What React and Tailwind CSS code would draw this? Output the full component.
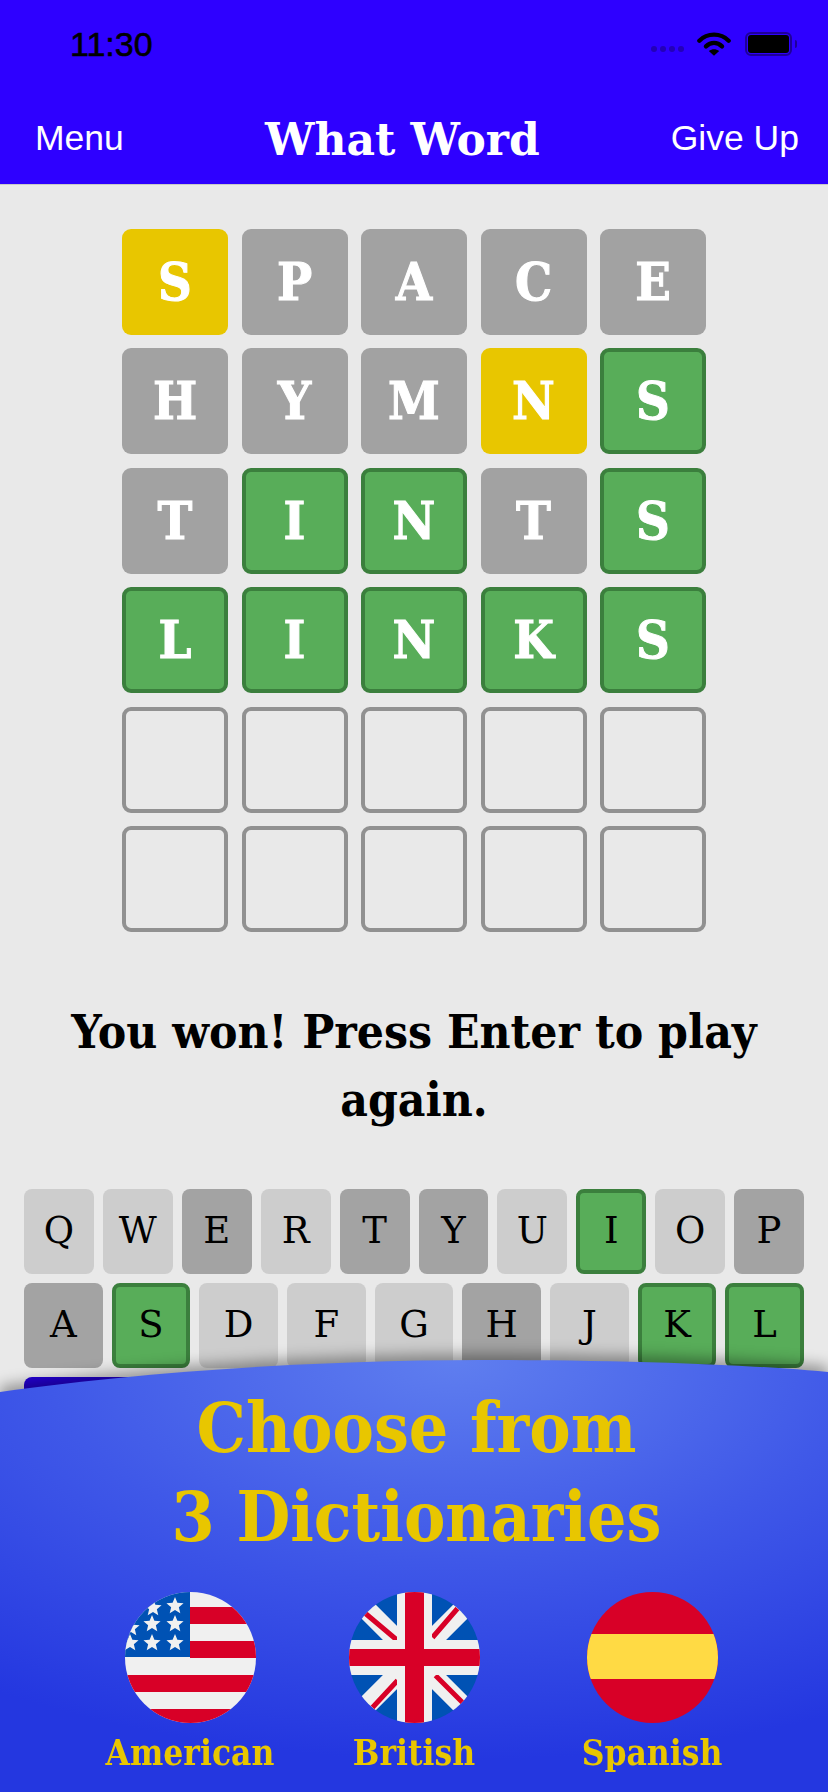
const GRID = [
  [['S', 'y'], ['P', 'x'], ['A', 'x'], ['C', 'x'], ['E', 'x']],
  [['H', 'x'], ['Y', 'x'], ['M', 'x'], ['N', 'y'], ['S', 'g']],
  [['T', 'x'], ['I', 'g'], ['N', 'g'], ['T', 'x'], ['S', 'g']],
  [['L', 'g'], ['I', 'g'], ['N', 'g'], ['K', 'g'], ['S', 'g']],
  [['', 'e'], ['', 'e'], ['', 'e'], ['', 'e'], ['', 'e']],
  [['', 'e'], ['', 'e'], ['', 'e'], ['', 'e'], ['', 'e']],
]

const TILE = {
  y: 'bg-[#e8c600]',
  x: 'bg-[#a2a2a2]',
  g: 'bg-[#58ad59] border-4 border-[#3b7f3d]',
  e: 'border-4 border-[#919191]',
}

const KEY = {
  n: 'bg-[#cdcdcd]',
  x: 'bg-[#a3a3a3]',
  g: 'bg-[#58ad59] border-4 border-[#3b7f3d]',
}

const ROW1 = [['Q', 'n'], ['W', 'n'], ['E', 'x'], ['R', 'n'], ['T', 'x'], ['Y', 'x'], ['U', 'n'], ['I', 'g'], ['O', 'n'], ['P', 'x']]
const ROW2 = [['A', 'x'], ['S', 'g'], ['D', 'n'], ['F', 'n'], ['G', 'n'], ['H', 'x'], ['J', 'n'], ['K', 'g'], ['L', 'g']]

const serif = "font-['DejaVu_Serif',serif]"
const slab = "font-['DejaVu_Serif_Condensed','DejaVu_Serif',serif]"

const STARS = [[50, 14], [28, 16], [27, 32], [50, 32], [6, 36], [5, 51], [27, 51], [50, 51]]

function starPoints(cx, cy, r) {
  const pts = []
  for (let i = 0; i < 10; i++) {
    const a = -Math.PI / 2 + (i * Math.PI) / 5
    const d = i % 2 ? r * 0.45 : r
    pts.push(`${cx + d * Math.cos(a)},${cy + d * Math.sin(a)}`)
  }
  return pts.join(' ')
}

function StatusBar() {
  return (
    <div className="flex h-[76px] items-center justify-between pl-[70px] pr-[31px] pt-[12px]">
      <span className="font-['Liberation_Sans',sans-serif] text-[34px] font-medium leading-none text-black [-webkit-text-stroke:0.6px_black]">11:30</span>
      <div className="flex items-center">
        <div className="mr-[13px] mt-[10px] flex gap-[3px]">
          {[0, 1, 2, 3].map(i => (
            <span key={i} className="h-[6px] w-[6px] rounded-full bg-[#2400b8]" />
          ))}
        </div>
        <svg width="34" height="26" viewBox="0 0 36 26" className="mr-[14px]">
          <path d="M2.5 9.5C11 1 25 1 33.5 9.5" fill="none" stroke="#000" strokeWidth="4.6" strokeLinecap="round" />
          <path d="M9.5 15.5C14.5 10.5 21.5 10.5 26.5 15.5" fill="none" stroke="#000" strokeWidth="4.6" strokeLinecap="round" />
          <path d="M12.5 20.5L18 25.5L23.5 20.5C20 17.8 16 17.8 12.5 20.5Z" fill="#000" />
        </svg>
        <div className="flex items-center">
          <div className="h-[24px] w-[47px] rounded-[6px] border-2 border-[#1f0099] p-[1px]">
            <div className="h-full w-full rounded-[3px] bg-black" />
          </div>
          <div className="ml-[3px] h-[8px] w-[2px] rounded-r-sm bg-[#1f0099]" />
        </div>
      </div>
    </div>
  )
}

function Header() {
  return (
    <div className="bg-[#2e00ff]">
      <StatusBar />
      <div className="relative flex h-[108px] items-center justify-between pl-[35px] pr-[29px] pt-[18px] font-['Liberation_Sans',sans-serif] text-[35.5px] text-white">
        <span>Menu</span>
        <span className={`${serif} absolute left-[265px] top-[37px] text-[44px] font-bold leading-[54px]`}>What Word</span>
        <span>Give Up</span>
      </div>
      <div className="h-[1px] bg-[#c9c9c9]" />
    </div>
  )
}

function Board() {
  return (
    <div className="mx-auto mt-[43.5px] grid w-[584px] grid-cols-5 gap-x-[13.5px] gap-y-[13.5px]">
      {GRID.flat().map(([letter, state], i) => (
        <div
          key={i}
          className={`${slab} ${TILE[state]} flex h-[106px] items-center justify-center rounded-[9px] text-[52px] font-bold text-white [-webkit-text-stroke:1px_white]`}
        >
          {letter}
        </div>
      ))}
    </div>
  )
}

function Keyboard() {
  return (
    <div className={`${serif} mt-[56px] flex flex-col gap-[9px] px-[24px] text-[37px] text-black`}>
      <div className="grid grid-cols-10 gap-[9px]">
        {ROW1.map(([k, s]) => (
          <div key={k} className={`${KEY[s]} flex h-[85px] items-center justify-center rounded-[8px]`}>{k}</div>
        ))}
      </div>
      <div className="grid grid-cols-9 gap-[9px]">
        {ROW2.map(([k, s]) => (
          <div key={k} className={`${KEY[s]} flex h-[85px] items-center justify-center rounded-[8px]`}>{k}</div>
        ))}
      </div>
      <div className="flex gap-[9px]">
        <div className="h-[85px] w-[130px] rounded-[8px] bg-[#2400d6]" />
      </div>
    </div>
  )
}

function UsFlag() {
  return (
    <svg viewBox="0 0 131 131" className="h-[131px] w-[131px]">
      <defs>
        <clipPath id="us"><circle cx="65.5" cy="65.5" r="65.5" /></clipPath>
      </defs>
      <g clipPath="url(#us)">
        <rect width="131" height="131" fill="#f0f0f0" />
        {[15, 49, 83, 117].map((y, i) => (
          <rect key={i} x={i < 2 ? 65 : 0} y={y} width="131" height={i === 3 ? 16 : 17} fill="#d80027" />
        ))}
        <rect width="65" height="65" fill="#0052b4" />
        {STARS.map(([x, y], i) => (
          <polygon key={i} points={starPoints(x, y, 9)} fill="#f0f0f0" />
        ))}
      </g>
    </svg>
  )
}

function UkFlag() {
  return (
    <svg viewBox="0 0 131 131" className="h-[131px] w-[131px]">
      <defs>
        <clipPath id="uk"><circle cx="65.5" cy="65.5" r="65.5" /></clipPath>
      </defs>
      <g clipPath="url(#uk)">
        <rect width="131" height="131" fill="#0052b4" />
        <path d="M16 16L115 115M115 16L16 115" stroke="#f0f0f0" strokeWidth="20" />
        <path d="M16.5 21.5L48.5 48.5M108.5 16.5L83.5 45.5M48.5 88.5L23.5 115.5M86.5 83.5L113.5 110.5" stroke="#d80027" strokeWidth="5" />
        <path d="M65.5 0V131M0 65.5H131" stroke="#f0f0f0" strokeWidth="35" />
        <path d="M65.5 0V131" stroke="#d80027" strokeWidth="19" />
        <path d="M0 65.5H131" stroke="#d80027" strokeWidth="17" />
      </g>
    </svg>
  )
}

function EsFlag() {
  return (
    <div className="flex h-[131px] w-[131px] flex-col overflow-hidden rounded-full bg-[#d80027]">
      <div className="mt-[42px] h-[45px] bg-[#ffda44]" />
    </div>
  )
}

function Flag({ label, children, className }) {
  return (
    <div className={`absolute top-[232px] flex w-[200px] flex-col items-center ${className}`}>
      {children}
      <span className={`${slab} mt-[11px] text-[35px] font-bold leading-[38px] text-[#e8c600]`}>{label}</span>
    </div>
  )
}

function PromoSheet() {
  return (
    <div className="absolute inset-x-0 bottom-0 h-[432px] drop-shadow-[0_-6px_7px_rgba(0,0,0,0.35)]">
      <div className="relative h-full bg-[radial-gradient(ellipse_820px_400px_at_55%_0%,#5f7eef_0%,#3f58e8_50%,#2437e0_100%)] [clip-path:path('M0_32C140_12_320_0_480_0C620_0_740_4_828_12V432H0Z')]">
        <div className={`${slab} pl-[5px] pt-[23px] text-center text-[69px] font-bold leading-[89px] text-[#e8c600]`}>
          <div>Choose from</div>
          <div>3 Dictionaries</div>
        </div>
        <Flag label="American" className="left-[90px]"><UsFlag /></Flag>
        <Flag label="British" className="left-[314px]"><UkFlag /></Flag>
        <Flag label="Spanish" className="left-[552px]"><EsFlag /></Flag>
      </div>
    </div>
  )
}

export default function App() {
  return (
    <div className="relative h-[1792px] w-[828px] overflow-hidden bg-[#e9e9e9]">
      <Header />
      <Board />
      <p className={`${slab} mx-auto mt-[64.5px] w-[730px] text-center text-[47.5px] font-bold leading-[68px] text-black`}>
        You won! Press Enter to play again.
      </p>
      <Keyboard />
      <PromoSheet />
    </div>
  )
}
